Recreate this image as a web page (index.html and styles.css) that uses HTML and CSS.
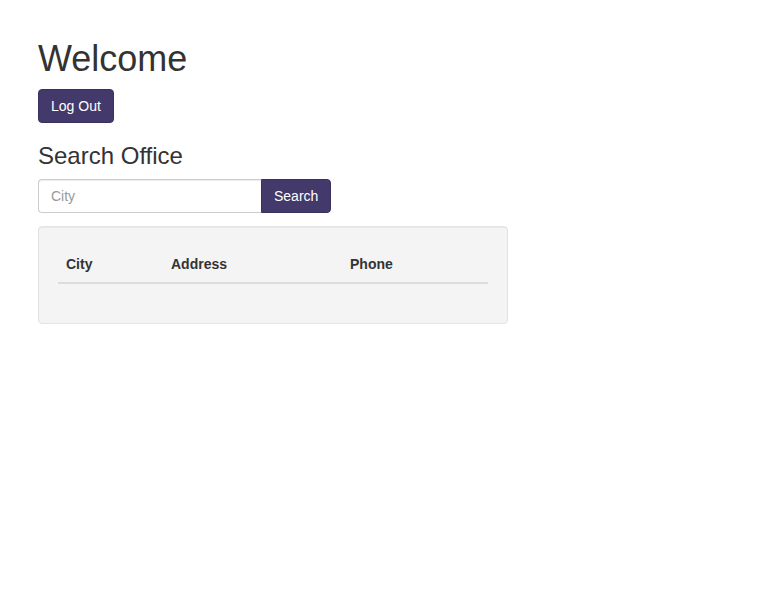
FILE: index.html
```html
<!DOCTYPE html>
<html lang="en">
<head>
<meta charset="utf-8">
<title>Welcome</title>
<link rel="stylesheet" href="styles.css">
</head>
<body>
<div class="page">
  <h1 class="title">Welcome</h1>
  <button class="btn" type="button">Log Out</button>
  <h3 class="subtitle">Search Office</h3>
  <form class="search">
    <input class="search-input" type="text" placeholder="City">
    <button class="btn btn-search" type="button">Search</button>
  </form>
  <div class="well">
    <table class="table">
      <thead>
        <tr>
          <th class="col-city">City</th>
          <th class="col-address">Address</th>
          <th class="col-phone">Phone</th>
        </tr>
      </thead>
      <tbody></tbody>
    </table>
  </div>
</div>
</body>
</html>
```
FILE: styles.css
```css
* { box-sizing: border-box; }
html, body { margin: 0; padding: 0; background: #fff; }
body {
  font-family: "Liberation Sans", Arial, Helvetica, sans-serif;
  font-size: 14px;
  line-height: 1.42857;
  color: #333;
}
.page { padding: 39px 38px 0; }
.title {
  margin: 0 0 10px;
  font-size: 36px;
  font-weight: 500;
  line-height: 1.1;
}
.subtitle {
  margin: 20px 0 10px;
  font-size: 24px;
  font-weight: 500;
  line-height: 1.1;
}
.btn {
  display: inline-block;
  margin: 0;
  padding: 6px 12px;
  font-family: inherit;
  font-size: 14px;
  line-height: 20px;
  color: #fff;
  background: #433a6b;
  border: 1px solid #3a325e;
  border-radius: 4px;
  cursor: pointer;
}
.search {
  display: flex;
  width: 293px;
  margin: 0 0 13px;
}
.search-input {
  width: 223px;
  height: 34px;
  padding: 6px 12px;
  font-family: inherit;
  font-size: 14px;
  line-height: 20px;
  color: #555;
  background: #fff;
  border: 1px solid #ccc;
  border-right: 0;
  border-radius: 4px 0 0 4px;
  box-shadow: inset 0 1px 1px rgba(0,0,0,.075);
  outline: none;
}
.search-input::placeholder { color: #999; }
.btn-search {
  width: 70px;
  height: 34px;
  border-radius: 0 4px 4px 0;
}
.well {
  width: 470px;
  padding: 19px;
  background: #f4f4f4;
  border: 1px solid #e3e3e3;
  border-radius: 4px;
  box-shadow: inset 0 1px 1px rgba(0,0,0,.05);
}
.table {
  width: 100%;
  margin-bottom: 20px;
  border-collapse: collapse;
  border-spacing: 0;
}
.table th {
  padding: 8px;
  text-align: left;
  font-weight: bold;
  line-height: 20px;
  border-bottom: 2px solid #ddd;
}
.col-city { width: 105px; }
.col-address { width: 179px; }
```
